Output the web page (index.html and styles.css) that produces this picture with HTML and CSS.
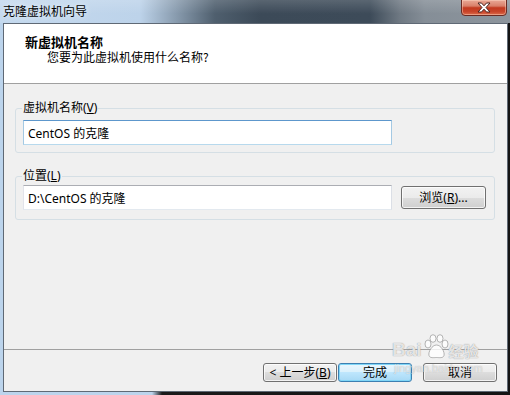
FILE: index.html
```html
<!DOCTYPE html>
<html lang="zh">
<head>
    <meta charset="UTF-8">
    <title>克隆虚拟机向导</title>
    <link rel="stylesheet" href="styles.css">
</head>
<body>

    <div class="window">
        <!-- 标题栏 -->
        <div class="titlebar">
            <span class="title">克隆虚拟机向导</span>
            <button class="close">
                <svg width="16" height="11" viewBox="0 0 16 11">
                    <path d="M2 1 L5.5 1 L8 3.8 L10.5 1 L14 1 L10 5.5 L14 10 L10.5 10 L8 7.2 L5.5 10 L2 10 L6 5.5 Z" fill="#fff" stroke="#4a2420" stroke-width="1" stroke-linejoin="round"/>
                </svg>
            </button>
        </div>

        <div class="client">
            <!-- 向导页头 -->
            <div class="header">
                <div class="header-title">新虚拟机名称</div>
                <div class="header-sub">您要为此虚拟机使用什么名称?</div>
            </div>

            <div class="content">
                <fieldset class="group">
                    <legend>虚拟机名称(<u>V</u>)</legend>
                    <div class="row">
                        <input class="text-input focused" type="text" value="CentOS 的克隆">
                    </div>
                </fieldset>

                <fieldset class="group group-location">
                    <legend>位置(<u>L</u>)</legend>
                    <div class="row">
                        <input class="text-input" type="text" value="D:\CentOS 的克隆">
                        <button class="btn browse">浏览(<u>R</u>)...</button>
                    </div>
                </fieldset>
            </div>

            <!-- 底部按钮 -->
            <div class="footer">
                <button class="btn back">&lt; 上一步(<u>B</u>)</button>
                <button class="btn btn-default">完成</button>
                <button class="btn cancel">取消</button>
            </div>
        </div>

        <!-- 水印 -->
        <div class="watermark">
            <div class="wm-top">
                <span class="wm-bai">Bai</span>
                <svg class="wm-paw" width="26" height="26" viewBox="0 0 26 26">
                    <g fill="rgba(255,255,255,0.8)" stroke="rgba(150,150,150,0.7)" stroke-width="1">
                        <ellipse cx="5" cy="10" rx="3" ry="4"/>
                        <ellipse cx="10" cy="4.5" rx="3" ry="3.8"/>
                        <ellipse cx="17" cy="4.5" rx="3" ry="3.8"/>
                        <ellipse cx="22" cy="10" rx="3" ry="4"/>
                        <path d="M13.5 11 C9 11 5 18 6 21.5 C7 24.5 11 23.5 13.5 23.5 C16 23.5 20 24.5 21 21.5 C22 18 18 11 13.5 11 Z"/>
                    </g>
                </svg>
                <span class="wm-jy">经验</span>
            </div>
            <div class="wm-url">jingyan.baidu.com</div>
        </div>
    </div>

</body>
</html>
```

FILE: styles.css
```css
* {
    box-sizing: border-box;
}
body {
    margin: 0;
    font-family: "Noto Sans", "Noto Sans CJK SC", sans-serif;
    font-size: 12px;
    color: #000;
}
.window {
    position: relative;
    width: 510px;
    height: 395px;
    display: flex;
    flex-direction: column;
    overflow: hidden;
    background: linear-gradient(to right, #bcd4ec 0, #bcd4ec 152px, #1a1a1a 162px, #141414 100%);
}
.titlebar {
    height: 23px;
    flex-shrink: 0;
    display: flex;
    justify-content: space-between;
    align-items: flex-start;
    padding-left: 3px;
    background:
        linear-gradient(to bottom, rgba(255, 255, 255, 0.15), rgba(255, 255, 255, 0) 60%),
        linear-gradient(to right, #c4d9ee 0, #bdd3ea 140px, #8a9db0 175px, #4f5f6e 215px, #3c4a58 260px, #3d4b59 370px, #6f7983 400px, #858e97 425px, #8d959d 100%);
}
.title {
    margin-top: 4px;
    line-height: 14px;
    font-size: 12px;
    font-family: "Noto Sans CJK SC", sans-serif;
    text-shadow: 0 0 6px rgba(255, 255, 255, 0.9);
}
.close {
    width: 46px;
    height: 17px;
    margin: -1px 3px 0 0;
    padding: 0;
    display: flex;
    align-items: center;
    justify-content: center;
    border: 1px solid #6a2a22;
    border-radius: 0 0 4px 4px;
    background: linear-gradient(to bottom, #e9a896 0%, #d9806a 40%, #c2391f 52%, #c8452a 78%, #dd6d4c 100%);
    box-shadow: inset 0 0 0 1px rgba(255, 220, 200, 0.45);
}
.client {
    flex: 1;
    display: flex;
    flex-direction: column;
    margin: 0 2px 3px 3px;
    border: 1px solid #5f6975;
    background: #f0f0f0;
}
.header {
    height: 60px;
    flex-shrink: 0;
    background: #fff;
    border-bottom: 1px solid #a0a0a0;
    padding: 11px 0 0 21px;
}
.header-title {
    font-family: "Noto Sans CJK SC", sans-serif;
    font-size: 13px;
    font-weight: bold;
    line-height: 13px;
}
.header-sub {
    font-family: "Noto Sans CJK SC", sans-serif;
    margin: 2px 0 0 22px;
    line-height: 13px;
}
.content {
    flex: 1;
    padding: 17px 12px 0 11px;
}
.group {
    margin: 0;
    min-width: 0;
    border: 1px solid #d5dfe5;
    border-radius: 3px;
    padding: 5px 0 7px 7px;
}
.group legend {
    margin-left: -1px;
    padding: 0 1px;
    line-height: 14px;
    font-size: 12px;
}
.group-location {
    margin-top: 16px;
    padding-top: 2px;
    padding-bottom: 9px;
}
.row {
    display: flex;
    align-items: center;
}
.text-input {
    width: 369px;
    height: 25px;
    margin: 0;
    padding: 0 4px;
    font-family: "Noto Sans", "Noto Sans CJK SC", sans-serif;
    font-size: 12px;
    color: #000;
    background: #fff;
    border: 1px solid;
    border-color: #abadb3 #dbdfe6 #e3e9ef #e2e3ea;
    outline: none;
}
.text-input.focused {
    border-color: #5d97cc #a4c9e3 #b7d9ed #a4c9e3;
}
.btn {
    height: 19px;
    width: 74px;
    padding: 0;
    font-family: "Noto Sans", "Noto Sans CJK SC", sans-serif;
    font-size: 12px;
    line-height: 15px;
    color: #000;
    border: 1px solid #707070;
    border-radius: 3px;
    background: linear-gradient(to bottom, #f2f2f2 0%, #ebebeb 50%, #dddddd 50%, #cfcfcf 100%);
    box-shadow: inset 0 0 0 1px rgba(255, 255, 255, 0.75);
}
.btn u {
    text-underline-offset: 1px;
}
.browse {
    width: 85px;
    height: 23px;
    margin-left: 9px;
}
.footer {
    height: 42px;
    flex-shrink: 0;
    border-top: 1px solid #a0a0a0;
    display: flex;
    justify-content: flex-end;
    align-items: flex-start;
    padding: 13px 10px 0 0;
}
.back {
    margin-right: 1px;
}
.btn-default {
    margin-right: 11px;
    border-color: #3c7fb1;
    background: linear-gradient(to bottom, #eaf6fd 0%, #d9f0fc 50%, #bee6fd 50%, #a7d9f5 100%);
    box-shadow: inset 0 0 0 1px #7fd6f7;
}
.watermark {
    position: absolute;
    left: 392px;
    top: 334px;
    pointer-events: none;
}
.wm-top {
    display: flex;
    align-items: flex-end;
}
.wm-bai {
    font-family: "Liberation Sans", sans-serif;
    font-weight: bold;
    font-size: 19px;
    line-height: 18px;
    color: rgba(255, 255, 255, 0.8);
    text-shadow: 0 0 1px rgba(110, 110, 110, 0.9);
    margin-bottom: 1px;
}
.wm-paw {
    margin: 0 0 0 1px;
}
.wm-jy {
    font-family: "Noto Sans CJK SC", sans-serif;
    font-weight: bold;
    font-size: 15px;
    line-height: 16px;
    color: rgba(255, 255, 255, 0.8);
    text-shadow: 0 0 1px rgba(110, 110, 110, 0.9);
    margin-bottom: 1px;
}
.wm-url {
    margin: 3px 0 0 2px;
    font-family: "Liberation Sans", sans-serif;
    font-size: 11px;
    line-height: 11px;
    color: rgba(255, 255, 255, 0.6);
    text-shadow: 0 0 1px rgba(120, 120, 120, 0.6);
}
```
